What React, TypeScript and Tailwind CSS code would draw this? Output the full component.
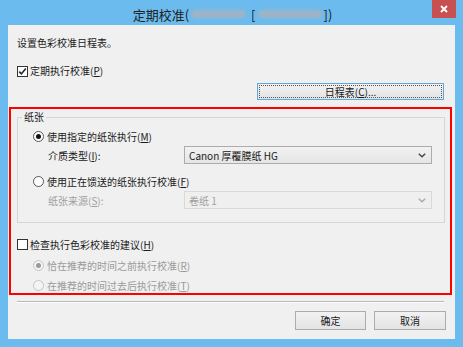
import React from "react";

const FONT = { fontFamily: '"Noto Sans CJK SC", "Noto Sans", sans-serif' };

function Check({ checked }: { checked?: boolean }) {
  return (
    <span className="w-[11px] h-[11px] border border-[#333] bg-white flex items-center justify-center shrink-0">
      {checked && (
        <svg width="9" height="9" viewBox="0 0 9 9">
          <polyline points="1.2,4.6 3.4,6.9 7.8,1.6" fill="none" stroke="#222" strokeWidth="1.6" />
        </svg>
      )}
    </span>
  );
}

function Radio({ checked, disabled }: { checked?: boolean; disabled?: boolean }) {
  return (
    <span
      className={
        "w-[11px] h-[11px] rounded-full border flex items-center justify-center shrink-0 " +
        (disabled ? "border-[#c4c4c4] bg-[#f4f4f4]" : "border-[#555] bg-white")
      }
    >
      {checked && (
        <span className={"w-[5px] h-[5px] rounded-full " + (disabled ? "bg-[#9a9a9a]" : "bg-[#111]")} />
      )}
    </span>
  );
}

function Chevron({ color }: { color: string }) {
  return (
    <svg width="8" height="5" viewBox="0 0 8 5">
      <polyline points="0.8,0.8 4,3.8 7.2,0.8" fill="none" stroke={color} strokeWidth="1.4" />
    </svg>
  );
}

export default function App() {
  return (
    <div className="w-[463px] h-[347px] bg-[#6bbbee] flex flex-col text-[10px] text-[#1a1a1a]" style={FONT}>
      {/* title bar */}
      <div className="h-[25px] relative flex items-center justify-center shrink-0">
        <div className="flex items-center text-[13px] text-[#222] leading-none pt-[3px] ml-[2px]">
          <span>定期校准(</span>
          <span className="w-[55px] h-[8px] mx-[2px] rounded-sm bg-[#9eb4c6] blur-[1.5px]" />
          <span className="ml-[3px]">[</span>
          <span className="w-[64px] h-[8px] mx-[2px] rounded-sm bg-[#9eb4c6] blur-[1.5px]" />
          <span>])</span>
        </div>
        <div className="absolute right-[7px] top-0 w-[24px] h-[18px] bg-[#c75050] flex items-center justify-center">
          <svg width="8" height="8" viewBox="0 0 8 8">
            <path d="M1 1 L7 7 M7 1 L1 7" stroke="white" strokeWidth="1.8" />
          </svg>
        </div>
      </div>

      {/* content */}
      <div className="mx-[8px] h-[314px] bg-[#f0f0f0] flex flex-col shrink-0">
        <div className="mt-[11px] ml-[9px] h-[14px] leading-[14px]">设置色彩校准日程表。</div>

        <div className="mt-[14px] ml-[9px] h-[14px] flex items-center gap-[2px] leading-[14px]">
          <Check checked />
          <span>
            定期执行校准(<u>P</u>)
          </span>
        </div>

        <div className="mt-[5px] self-end mr-[11px] w-[187px] h-[17px] border border-[#5fa8dd] bg-gradient-to-b from-[#f2f2f2] to-[#e3e3e3] p-[1px]">
          <div className="w-full h-full border border-dotted border-[#555] flex items-center justify-center leading-none">
            日程表(<u>C</u>)...
          </div>
        </div>

        {/* red annotation frame */}
        <div className="mt-[7px] ml-[1px] w-[443px] h-[188px] border-2 border-[#ff0000] flex flex-col">
          {/* group box */}
          <div className="mt-[8px] ml-[6px] w-[428px] h-[106px] border border-[#d5d5d5] relative flex flex-col">
            <span className="absolute left-[4px] top-[-8px] px-[2px] bg-[#f0f0f0] leading-[14px]">纸张</span>

            <div className="mt-[10px] ml-[15px] h-[16px] flex items-center gap-[3px]">
              <Radio checked />
              <span>
                使用指定的纸张执行(<u>M</u>)
              </span>
            </div>

            <div className="mt-[2px] h-[18px] flex items-center">
              <span className="ml-[30px] w-[136px]">
                介质类型(<u>I</u>):
              </span>
              <div className="w-[248px] h-[18px] border border-[#acacac] bg-gradient-to-b from-[#f2f2f2] to-[#e5e5e5] flex items-center justify-between pl-[4px] pr-[5px]">
                <span>Canon 厚覆膜纸 HG</span>
                <Chevron color="#444" />
              </div>
            </div>

            <div className="mt-[9px] ml-[15px] h-[16px] flex items-center gap-[3px]">
              <Radio />
              <span>
                使用正在馈送的纸张执行校准(<u>F</u>)
              </span>
            </div>

            <div className="mt-[2px] h-[18px] flex items-center text-[#a0a0a0]">
              <span className="ml-[30px] w-[136px]">
                纸张来源(<u>S</u>):
              </span>
              <div className="w-[248px] h-[18px] border border-[#d9d9d9] bg-[#efefef] flex items-center justify-between pl-[4px] pr-[5px]">
                <span>卷纸 1</span>
                <Chevron color="#a8a8a8" />
              </div>
            </div>
          </div>

          <div className="mt-[13px] ml-[6px] h-[16px] flex items-center gap-[2px]">
            <Check />
            <span>
              检查执行色彩校准的建议(<u>H</u>)
            </span>
          </div>

          <div className="mt-[6px] ml-[22px] h-[14px] flex items-center gap-[3px] text-[#9a9a9a]">
            <Radio checked disabled />
            <span>
              恰在推荐的时间之前执行校准(<u>R</u>)
            </span>
          </div>

          <div className="mt-[6px] ml-[22px] h-[14px] flex items-center gap-[3px] text-[#9a9a9a]">
            <Radio disabled />
            <span>
              在推荐的时间过去后执行校准(<u>T</u>)
            </span>
          </div>
        </div>

        {/* separator */}
        <div className="mt-[6px] ml-[9px] w-[427px] h-[2px] border-t border-[#b9b9b9] border-b border-b-white" />

        {/* buttons */}
        <div className="mt-[8px] self-end mr-[9px] flex gap-[8px]">
          <div className="w-[71px] h-[19px] border border-[#acacac] bg-gradient-to-b from-[#f2f2f2] to-[#e3e3e3] flex items-center justify-center leading-none">
            确定
          </div>
          <div className="w-[72px] h-[19px] border border-[#acacac] bg-gradient-to-b from-[#f2f2f2] to-[#e3e3e3] flex items-center justify-center leading-none">
            取消
          </div>
        </div>
      </div>
    </div>
  );
}
